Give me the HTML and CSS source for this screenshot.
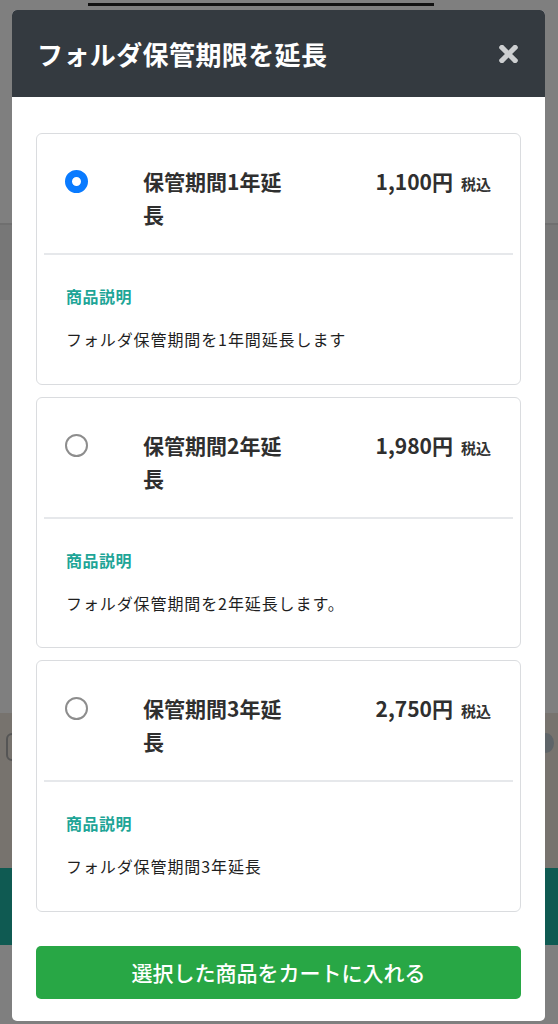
FILE: index.html
```html
<!DOCTYPE html>
<html lang="ja">
<head>
<meta charset="utf-8">
<title>フォルダ保管期限を延長</title>
<link rel="stylesheet" href="styles.css">
</head>
<body>
<div class="page">
  <div class="page-top"><div class="rule"></div></div>
  <div class="band-dark"></div>
  <div class="page-mid"></div>
  <div class="band-brown">
    <span class="deco-left"></span>
    <span class="deco-right"></span>
  </div>
  <div class="band-teal"></div>
</div>

<div class="modal">
  <div class="modal-header">
    <h1 class="modal-title">フォルダ保管期限を延長</h1>
    <svg class="close" viewBox="0 88 352 336" aria-label="閉じる"><path d="M242.72 256l100.07-100.07c12.28-12.28 12.28-32.19 0-44.48l-22.24-22.24c-12.28-12.28-32.19-12.28-44.48 0L176 189.28 75.930 89.21c-12.280-12.28-32.19-12.28-44.48 0L9.21 111.45c-12.28 12.28-12.28 32.19 0 44.48L109.28 256 9.21 356.07c-12.28 12.28-12.28 32.190 0 44.48l22.24 22.24c12.28 12.28 32.2 12.28 44.48 0L176 322.72l100.07 100.07c12.28 12.28 32.2 12.28 44.48 0l22.24-22.24c12.28-12.28 12.28-32.19 0-44.48L242.72 256z"/></svg>
  </div>
  <div class="modal-body">
    <div class="card">
      <div class="card-top">
        <span class="radio checked"></span>
        <div class="item-name">保管期間1年延長</div>
        <div class="price">1,100円<span class="tax">税込</span></div>
      </div>
      <div class="divider"></div>
      <div class="card-bottom">
        <div class="desc-label">商品説明</div>
        <div class="desc">フォルダ保管期間を1年間延長します</div>
      </div>
    </div>
    <div class="card">
      <div class="card-top">
        <span class="radio"></span>
        <div class="item-name">保管期間2年延長</div>
        <div class="price">1,980円<span class="tax">税込</span></div>
      </div>
      <div class="divider"></div>
      <div class="card-bottom">
        <div class="desc-label">商品説明</div>
        <div class="desc">フォルダ保管期間を2年延長します。</div>
      </div>
    </div>
    <div class="card">
      <div class="card-top">
        <span class="radio"></span>
        <div class="item-name">保管期間3年延長</div>
        <div class="price">2,750円<span class="tax">税込</span></div>
      </div>
      <div class="divider"></div>
      <div class="card-bottom">
        <div class="desc-label">商品説明</div>
        <div class="desc">フォルダ保管期間3年延長</div>
      </div>
    </div>
    <button class="cart-btn" type="button">選択した商品をカートに入れる</button>
  </div>
</div>
</body>
</html>
```

FILE: styles.css
```css
* { box-sizing: border-box; }
html, body { margin: 0; padding: 0; }
body {
  background: #7f7f7f;
  font-family: "Noto Sans CJK JP", "Noto Sans", sans-serif;
  width: 558px;
  height: 1024px;
  overflow: hidden;
  position: relative;
}

/* dimmed page behind the modal */
.page-top { height: 223px; padding-top: 3px; }
.rule { margin-left: 88px; width: 346px; height: 3px; background: #111; }
.band-dark { height: 77px; background: #777; border-top: 2px solid #6f6f6f; }
.page-mid { height: 413px; }
.band-brown { height: 155px; background: #77736e; position: relative; }
.deco-left {
  position: absolute; left: 6px; top: 20px; width: 14px; height: 28px;
  border: 2px solid #555; border-radius: 6px;
}
.deco-right {
  position: absolute; right: 4px; top: 20px; width: 16px; height: 20px;
  border-radius: 50%; background: #5e6468;
}
.band-teal { height: 77px; background: #0f5a52; }

/* modal */
.modal {
  position: absolute;
  left: 12px;
  top: 10px;
  width: 533px;
  height: 1011px;
  background: #fff;
  border-radius: 5px;
  overflow: hidden;
}
.modal-header {
  height: 87px;
  background: #343a40;
  display: flex;
  align-items: center;
  justify-content: space-between;
  padding: 0 27px 0 25px;
}
.modal-title {
  margin: 0;
  color: #fff;
  font-size: 26px;
  font-weight: 700;
  letter-spacing: 0.4px;
}
.close { width: 19px; height: 18px; fill: #cdcfd1; }

.modal-body {
  padding: 36px 24px 22px;
  display: flex;
  flex-direction: column;
  gap: 12px;
}
.card {
  border: 1px solid #dadcdf;
  border-radius: 6px;
  background: #fff;
}
.card-top {
  display: grid;
  grid-template-columns: 106px 150px 1fr;
  align-items: start;
  padding: 31px 29px 22px 0;
}
.radio {
  margin: 5px 0 0 28px;
  width: 23px;
  height: 23px;
  border-radius: 50%;
  border: 2px solid #8d8d8d;
  background: #fff;
}
.radio.checked {
  border: 7.5px solid #0a7bff;
}
.item-name {
  font-size: 21px;
  line-height: 33px;
  font-weight: 700;
  color: #2f2f2f;
}
.price {
  text-align: right;
  font-size: 21px;
  line-height: 33px;
  font-weight: 700;
  color: #2f2f2f;
}
.tax {
  font-size: 15px;
  margin-left: 8px;
  color: #333;
}
.divider {
  height: 2px;
  margin: 0 7px;
  background: #e6e8eb;
}
.card-bottom {
  padding: 29px 20px 32.5px 29px;
}
.desc-label {
  font-size: 16px;
  line-height: 24px;
  font-weight: 700;
  color: #1ea597;
  letter-spacing: 0.5px;
}
.desc {
  margin-top: 19px;
  font-size: 16px;
  line-height: 24px;
  color: #1f1f1f;
  letter-spacing: 0.9px;
}
.cart-btn {
  margin-top: 22px;
  height: 53px;
  border: none;
  border-radius: 5px;
  background: #28a745;
  color: #fff;
  font-family: inherit;
  font-size: 21px;
  font-weight: 500;
  cursor: pointer;
}
```
